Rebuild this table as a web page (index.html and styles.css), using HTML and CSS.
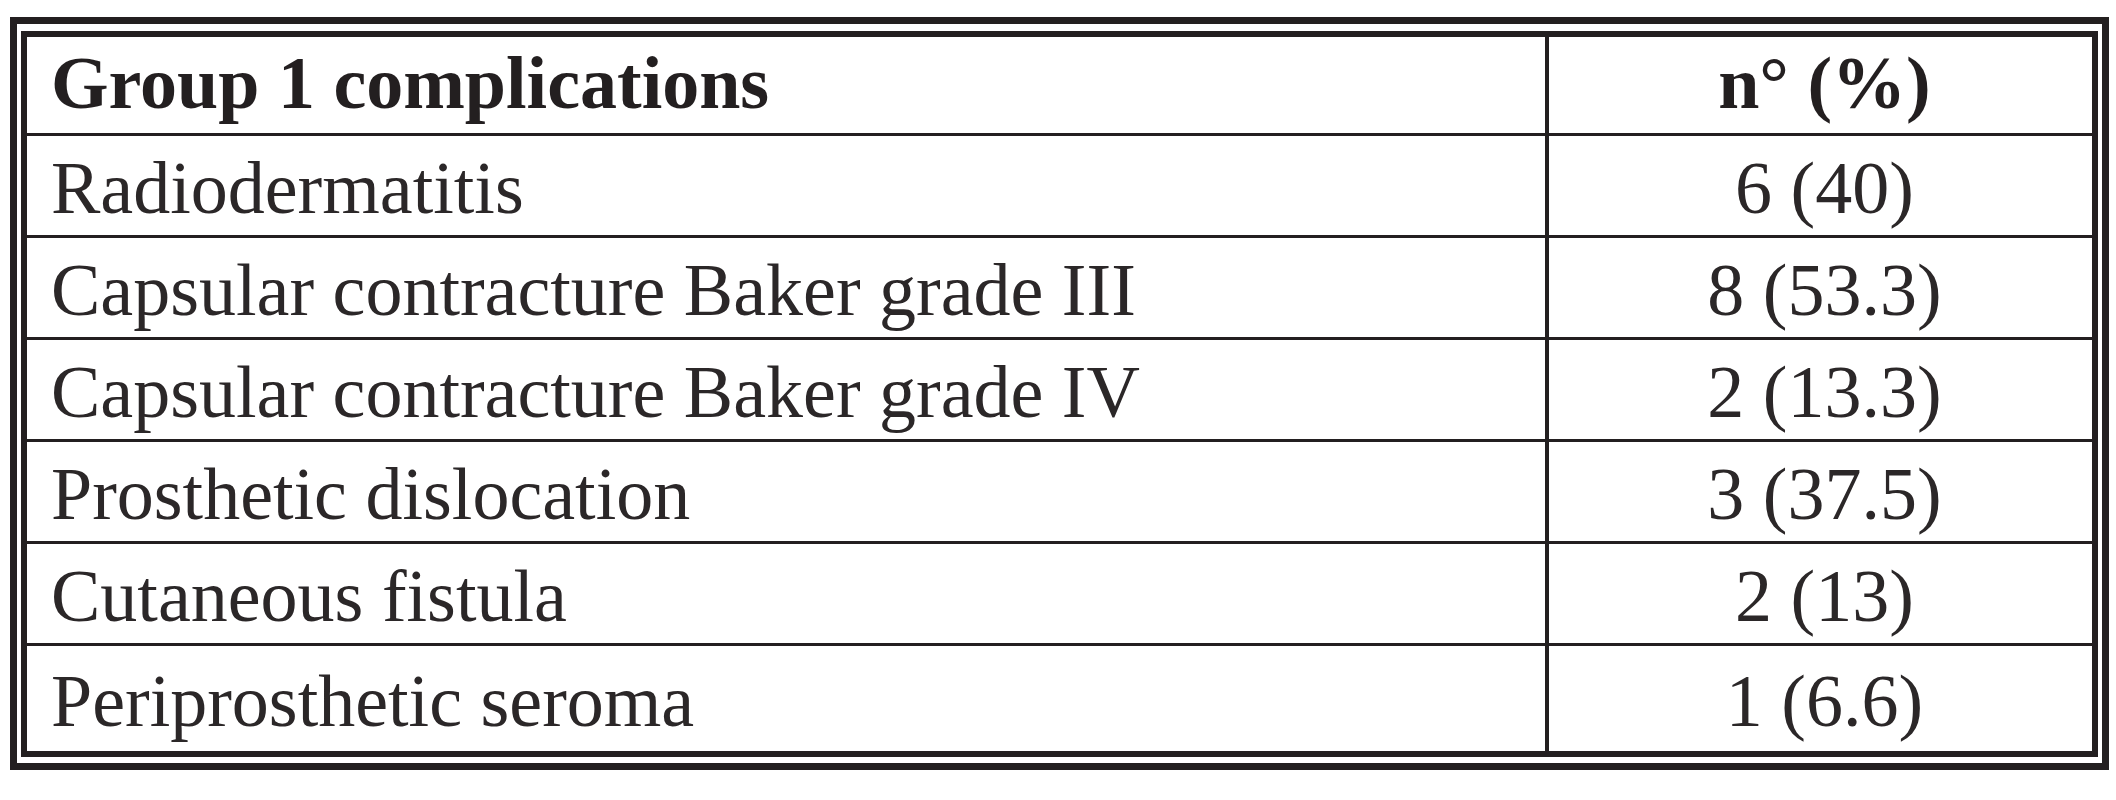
FILE: index.html
```html
<!DOCTYPE html>
<html>
<head>
<meta charset="utf-8">
<link rel="stylesheet" href="styles.css">
</head>
<body>
<div class="frame">
  <table class="complications">
    <thead>
      <tr>
        <th class="name">Group 1 complications</th>
        <th class="value">n° (%)</th>
      </tr>
    </thead>
    <tbody>
      <tr><td class="name">Radiodermatitis</td><td class="value">6 (40)</td></tr>
      <tr><td class="name">Capsular contracture Baker grade III</td><td class="value">8 (53.3)</td></tr>
      <tr><td class="name">Capsular contracture Baker grade IV</td><td class="value">2 (13.3)</td></tr>
      <tr><td class="name">Prosthetic dislocation</td><td class="value">3 (37.5)</td></tr>
      <tr><td class="name">Cutaneous fistula</td><td class="value">2 (13)</td></tr>
      <tr class="last"><td class="name">Periprosthetic seroma</td><td class="value">1 (6.6)</td></tr>
    </tbody>
  </table>
</div>
</body>
</html>
```

FILE: styles.css
```css
html, body {
  margin: 0;
  padding: 0;
  background: #ffffff;
}

body {
  padding: 17px 0 0 10px;
  font-family: "Liberation Serif", "Times New Roman", serif;
  color: #231f20;
}

.frame {
  width: 2099px;
  box-sizing: border-box;
  border: 7px solid #231f20;
  padding: 7px 4px 6px 4px;
}

.complications {
  width: 100%;
  border-collapse: separate;
  border-spacing: 0;
  border: 6px solid #231f20;
  table-layout: fixed;
}

.complications th,
.complications td {
  box-sizing: border-box;
  border-bottom: 3px solid #231f20;
  font-size: 74px;
  line-height: 1;
  vertical-align: middle;
  white-space: nowrap;
}

.complications th {
  height: 99px;
  font-weight: bold;
  padding: 0 24px 4px 24px;
}

.complications td {
  height: 102px;
  font-weight: normal;
  color: #2b2728;
  padding: 4px 24px 0 24px;
}

.complications .last td {
  height: 105px;
  border-bottom: none;
}

.complications .name {
  text-align: left;
  border-right: 4px solid #231f20;
}

.complications th.value,
.complications td.value {
  text-align: center;
  width: 543px;
  padding-left: 8px;
  padding-right: 0;
}
```
